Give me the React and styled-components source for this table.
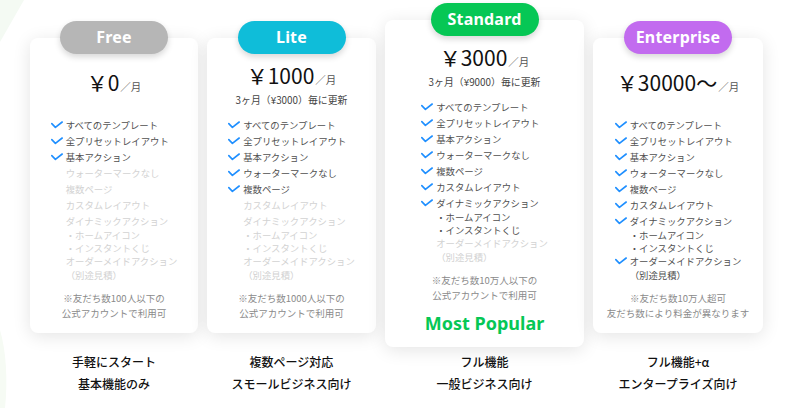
import React from 'react'
import styled, { createGlobalStyle } from 'styled-components'

const GlobalStyle = createGlobalStyle`
    html, body{
        margin: 0;
        padding: 0;
        background: #ffffff;
    }
    body{
        font-family: "Noto Sans CJK JP", "Noto Sans", sans-serif;
        color: #222;
    }
`

const Page = styled.div`
    position: relative;
    width: 800px;
    height: 408px;
    overflow: hidden;
    padding: 20px 0 0 30px;
    box-sizing: border-box;
`

const Backdrop = styled.svg`
    position: absolute;
    left: 0;
    top: 0;
    z-index: 0;
`

const Grid = styled.div`
    position: relative;
    z-index: 1;
    display: grid;
    grid-template-columns: 168px 169px 199px 170px;
    column-gap: 9px;
    row-gap: 4px;
`

const Card = styled.div`
    position: relative;
    align-self: start;
    margin-top: ${p => p.$featured ? '0' : '18px'};
    background: #fff;
    border-radius: 8px;
    box-shadow: 0 3px 18px rgba(0, 0, 0, 0.11);
    padding: 24px 0 12px;
    text-align: center;
`

const Badge = styled.div`
    position: absolute;
    top: -17px;
    left: 50%;
    transform: translateX(-50%);
    width: 108px;
    height: 33px;
    border-radius: 17px;
    background: ${p => p.$color};
    box-shadow: 0 3px 6px rgba(0, 0, 0, 0.16);
    color: #fff;
    font-family: "Noto Sans", "Open Sans", sans-serif;
    font-weight: 700;
    font-size: 16px;
    line-height: 33px;
    letter-spacing: 0.2px;
`

const PriceBlock = styled.div`
    height: 44px;
    display: flex;
    flex-direction: column;
    justify-content: center;
    align-items: center;
`

const Price = styled.div`
    font-size: 21px;
    line-height: 26px;
    color: #111;
    font-weight: 400;
`

const Unit = styled.span`
    font-size: 10.5px;
    color: #555;
    margin-left: 1px;
`

const Renewal = styled.div`
    font-size: 9.9px;
    line-height: 14px;
    color: #444;
`

const FeatureList = styled.ul`
    list-style: none;
    padding: 0;
    margin: 11px auto 0;
    width: fit-content;
    text-align: left;
`

const Feature = styled.li`
    font-size: 9.4px;
    color: ${p => p.$on ? '#505050' : '#d2d2d2'};
`

const Label = styled.div`
    display: flex;
    align-items: center;
    line-height: 16px;
    white-space: nowrap;
`

const CheckSlot = styled.span`
    width: 15px;
    flex: none;
    display: flex;
    align-items: center;
`

const SubLines = styled.div`
    padding-left: 15px;
    line-height: 13px;
    margin-bottom: -2px;
    white-space: nowrap;
`

const Footnote = styled.div`
    margin-top: 11px;
    font-size: 9.5px;
    line-height: 15px;
    color: #8a8a8a;
`

const Popular = styled.div`
    margin-top: 8px;
    font-family: "Noto Sans", "Open Sans", sans-serif;
    font-weight: 700;
    font-size: 18px;
    line-height: 24px;
    color: #06c755;
`

const Tagline = styled.div`
    text-align: center;
    font-size: 12px;
    line-height: 22px;
    font-weight: 500;
    color: #111;
`

const Check = () => (
    <svg width="12" height="8" viewBox="0 0 12 8">
        <path d="M0.8 2.6 L4.4 6.4 L11.2 1" fill="none" stroke="#1f8fff" strokeWidth="1.6" strokeLinecap="round" strokeLinejoin="round" />
    </svg>
)

const features = [
    { text: 'すべてのテンプレート' },
    { text: '全プリセットレイアウト' },
    { text: '基本アクション' },
    { text: 'ウォーターマークなし' },
    { text: '複数ページ' },
    { text: 'カスタムレイアウト' },
    { text: 'ダイナミックアクション', sub: ['・ホームアイコン', '・インスタントくじ'] },
    { text: 'オーダーメイドアクション', sub: ['（別途見積）'] }
]

const plans = [
    {
        name: 'Free', color: '#b6b6b6', price: '￥0', level: 3,
        note: ['※友だち数100人以下の', '公式アカウントで利用可'],
        tag: ['手軽にスタート', '基本機能のみ']
    },
    {
        name: 'Lite', color: '#0fbdd9', price: '￥1000', renewal: '3ヶ月（¥3000）毎に更新', level: 5,
        note: ['※友だち数1000人以下の', '公式アカウントで利用可'],
        tag: ['複数ページ対応', 'スモールビジネス向け']
    },
    {
        name: 'Standard', color: '#06c755', price: '￥3000', renewal: '3ヶ月（¥9000）毎に更新', level: 7, featured: true,
        note: ['※友だち数10万人以下の', '公式アカウントで利用可'],
        tag: ['フル機能', '一般ビジネス向け']
    },
    {
        name: 'Enterprise', color: '#c26bef', price: '￥30000～', level: 8,
        note: ['※友だち数10万人超可', '友だち数により料金が異なります'],
        tag: ['フル機能+α', 'エンタープライズ向け']
    }
]

const PlanCard = ({ plan }) => (
    <Card $featured={plan.featured}>
        <Badge $color={plan.color}>{plan.name}</Badge>
        <PriceBlock>
            <Price>{plan.price}<Unit>／月</Unit></Price>
            {plan.renewal && <Renewal>{plan.renewal}</Renewal>}
        </PriceBlock>
        <FeatureList>
            {features.map((f, i) => {
                const on = i < plan.level
                return (
                    <Feature key={f.text} $on={on}>
                        <Label>
                            <CheckSlot>{on && <Check />}</CheckSlot>
                            {f.text}
                        </Label>
                        {f.sub && (
                            <SubLines>
                                {f.sub.map(s => <div key={s}>{s}</div>)}
                            </SubLines>
                        )}
                    </Feature>
                )
            })}
        </FeatureList>
        <Footnote>
            {plan.note.map(n => <div key={n}>{n}</div>)}
        </Footnote>
        {plan.featured && <Popular>Most Popular</Popular>}
    </Card>
)

const App = () => {
    return (
        <Page>
            <GlobalStyle />
            <Backdrop width="800" height="408" viewBox="0 0 800 408">
                <path d="M0 0 L24 0 L0 42 Z" fill="#f4faf3" />
                <path d="M0 330 C6 350 8 380 5 408 L0 408 Z" fill="#f6fbf4" />
            </Backdrop>
            <Grid>
                {plans.map(p => <PlanCard key={p.name} plan={p} />)}
                {plans.map(p => (
                    <Tagline key={p.name + '-tag'}>
                        {p.tag.map(t => <div key={t}>{t}</div>)}
                    </Tagline>
                ))}
            </Grid>
        </Page>
    )
}

export default App
